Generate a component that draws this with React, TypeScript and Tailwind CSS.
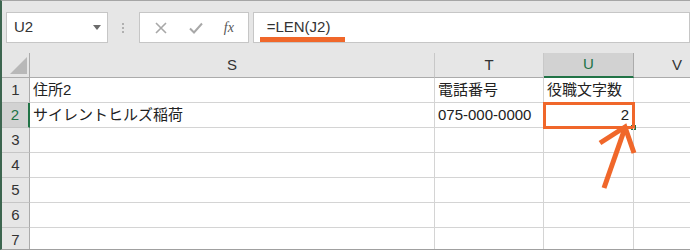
import React from 'react';

const font = { fontFamily: '"Liberation Sans", "Noto Sans CJK JP", sans-serif' };

const rows = [
  { n: '1', s: '住所2', t: '電話番号', u: '役職文字数' },
  { n: '2', s: 'サイレントヒルズ稲荷', t: '075-000-0000', u: '2' },
  { n: '3' },
  { n: '4' },
  { n: '5' },
  { n: '6' },
  { n: '7' },
];

const cols = 'grid grid-cols-[28px_405px_109px_90px_1fr]';

export default function App() {
  return (
    <div
      className="relative w-[690px] h-[250px] overflow-hidden bg-[#e6e6e6] border-t border-t-[#a5a5a5] border-l-2 border-l-[#3d6650] border-b border-b-[#a0a0a0] text-[15px] text-[#222]"
      style={font}
    >
      {/* formula bar */}
      <div className="flex items-center h-[31px] mt-[11px] ml-[4px]">
        <div className="flex items-center justify-between w-[102px] h-full bg-white border border-[#c6c6c6] pl-[7px] pr-[6px]">
          <span className="text-[#333]">U2</span>
          <svg width="8" height="5" viewBox="0 0 8 5">
            <path d="M0 0 L8 0 L4 5 Z" fill="#6b6b6b" />
          </svg>
        </div>
        <div className="flex flex-col items-center justify-center gap-[2px] w-[31px] h-full">
          <span className="w-[2px] h-[2px] bg-[#b0b0b0]" />
          <span className="w-[2px] h-[2px] bg-[#b0b0b0]" />
          <span className="w-[2px] h-[2px] bg-[#b0b0b0]" />
        </div>
        <div className="flex items-center w-[110px] h-full bg-white border border-[#c6c6c6]">
          <svg width="12" height="12" viewBox="0 0 12 12" className="ml-[15px]">
            <path d="M1 1 L11 11 M11 1 L1 11" stroke="#a8a8a8" strokeWidth="1.6" />
          </svg>
          <svg width="14" height="12" viewBox="0 0 14 12" className="ml-[22px]">
            <path d="M1 6.5 L5 10.5 L13 1.5" stroke="#a8a8a8" strokeWidth="2" fill="none" />
          </svg>
          <span
            className="ml-[21px] italic text-[14px] text-[#555]"
            style={{ fontFamily: '"Liberation Serif", serif' }}
          >
            fx
          </span>
        </div>
        <div className="relative flex items-center w-[438px] h-full ml-[4px] bg-white border border-[#c6c6c6] pl-[13px]">
          <span className="text-[#333]">=LEN(J2)</span>
          <span className="absolute left-[6px] top-[24px] w-[85px] h-[5px] bg-[#f0672a]" />
        </div>
      </div>

      {/* grid */}
      <div className="relative mt-[10px] bg-white">
        <div className={`${cols} h-[25px] bg-[#e6e6e6]`}>
          <div className="relative border-r border-b border-r-[#ababab] border-b-[#ababab]">
            <svg width="17" height="17" viewBox="0 0 17 17" className="absolute left-[8px] top-[4px]">
              <path d="M17 0 L17 17 L0 17 Z" fill="#b8b8b8" />
            </svg>
          </div>
          <div className="flex items-center justify-center border-r border-b border-r-[#c8c8c8] border-b-[#ababab] text-[#333]">S</div>
          <div className="flex items-center justify-center border-r border-b border-r-[#c8c8c8] border-b-[#ababab] text-[#333]">T</div>
          <div className="flex items-center justify-center bg-[#d2d2d2] border-r border-r-[#ababab] border-b-2 border-b-[#217346] text-[#217346]">U</div>
          <div className="flex items-center pl-[38px] border-b border-b-[#ababab] text-[#333]">V</div>
        </div>
        {rows.map((r) => {
          const sel = r.n === '2';
          return (
            <div key={r.n} className={`${cols} h-[25px]`}>
              <div
                className={`flex items-center justify-center border-b ${
                  sel
                    ? 'bg-[#d2d2d2] border-r-2 border-r-[#217346] text-[#217346] border-b-[#c6c6c6]'
                    : 'bg-[#e6e6e6] border-r border-r-[#ababab] border-b-[#c6c6c6] text-[#333]'
                }`}
              >
                {r.n}
              </div>
              <div className="flex items-center pl-[3px] border-r border-b border-[#d4d4d4] whitespace-nowrap">{r.s}</div>
              <div className="flex items-center pl-[3px] border-r border-b border-[#d4d4d4] whitespace-nowrap">{r.t}</div>
              <div
                className={`relative flex items-center border-r border-b border-[#d4d4d4] whitespace-nowrap ${
                  sel ? 'justify-end pr-[4px]' : 'pl-[3px]'
                }`}
              >
                {r.u}
                {sel && (
                  <>
                    <span className="absolute -right-[3px] -bottom-[3px] w-[5px] h-[5px] bg-[#217346]" />
                    <span className="absolute -left-[1px] -top-[1px] w-[92px] h-[27px] border-[3px] border-[#f0672a]" />
                  </>
                )}
              </div>
              <div className="border-b border-[#d4d4d4]" />
            </div>
          );
        })}
        {/* callout arrow */}
        <svg
          width="60"
          height="80"
          viewBox="0 0 60 80"
          className="absolute left-[580px] top-[65px]"
        >
          <path d="M22 70 L43 10" stroke="#f0672a" strokeWidth="5" fill="none" />
          <path d="M18 25 L43 9 L52 35" stroke="#f0672a" strokeWidth="5" fill="none" />
        </svg>
      </div>
    </div>
  );
}
